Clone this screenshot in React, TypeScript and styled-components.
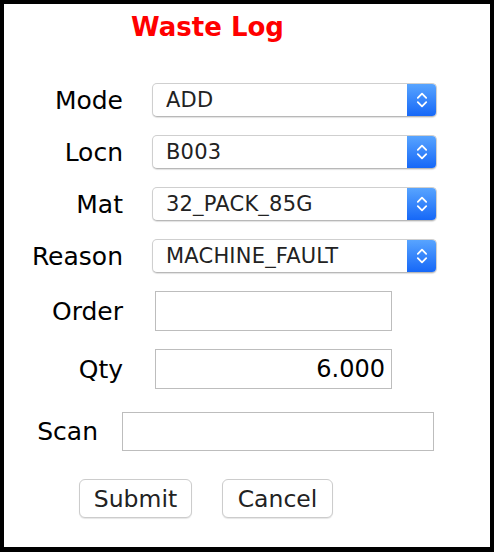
import { createGlobalStyle } from 'styled-components';
import styled from 'styled-components';

const GlobalStyle = createGlobalStyle`
    html, body {
        margin: 0;
        padding: 0;
        background: #fff;
    }
    * {
        box-sizing: border-box;
    }
`;

const fieldFont = `'DejaVu Sans', Verdana, sans-serif`;

const selects = [
    { label: 'Mode', value: 'ADD' },
    { label: 'Locn', value: 'B003' },
    { label: 'Mat', value: '32_PACK_85G' },
    { label: 'Reason', value: 'MACHINE_FAULT' },
];

const Chevrons = () => (
    <svg width="12" height="20" viewBox="0 0 12 20" fill="none">
        <path d="M1.8 7.8 L6 3.6 L10.2 7.8" stroke="#fff" strokeWidth="1.8" strokeLinecap="round" strokeLinejoin="round" />
        <path d="M1.8 12.2 L6 16.4 L10.2 12.2" stroke="#fff" strokeWidth="1.8" strokeLinecap="round" strokeLinejoin="round" />
    </svg>
);

export default function App() {
    return (
        <StyledFrame>
            <GlobalStyle />
            <StyledTitle>Waste Log</StyledTitle>
            <StyledForm>
                {selects.map((s) => (
                    <StyledRow key={s.label}>
                        <StyledLabel $width={119}>{s.label}</StyledLabel>
                        <StyledSelectShell $offset={29}>
                            <StyledSelect defaultValue={s.value}>
                                <option value={s.value}>{s.value}</option>
                            </StyledSelect>
                            <StyledStepper>
                                <Chevrons />
                            </StyledStepper>
                        </StyledSelectShell>
                    </StyledRow>
                ))}
                <StyledRow>
                    <StyledLabel $width={119}>Order</StyledLabel>
                    <StyledInput $offset={32} $width={237} $height={40} />
                </StyledRow>
                <StyledRow>
                    <StyledLabel $width={119}>Qty</StyledLabel>
                    <StyledInput $offset={32} $width={237} $height={40} $alignRight defaultValue="6.000" />
                </StyledRow>
                <StyledRow $spaceAbove={5}>
                    <StyledLabel $width={94}>Scan</StyledLabel>
                    <StyledInput $offset={24} $width={312} $height={39} />
                </StyledRow>
                <StyledButtons>
                    <StyledButton $width={113}>Submit</StyledButton>
                    <StyledButton $width={111}>Cancel</StyledButton>
                </StyledButtons>
            </StyledForm>
        </StyledFrame>
    );
}

const StyledFrame = styled.div`
    width: 494px;
    height: 552px;
    border: 4px solid #000;
    border-bottom-width: 5px;
    background: #fff;
    display: flex;
    flex-direction: column;
    padding-top: 8px;
`;

const StyledTitle = styled.div`
    font-family: 'DejaVu Sans', Verdana, sans-serif;
    font-weight: bold;
    font-size: 26px;
    line-height: 30px;
    height: 30px;
    color: #ff0000;
    padding-left: 127px;
`;

const StyledForm = styled.div`
    display: flex;
    flex-direction: column;
    gap: 18px;
    margin-top: 41px;
`;

const StyledRow = styled.div<{ $spaceAbove?: number }>`
    display: flex;
    align-items: center;
    margin-top: ${(p) => p.$spaceAbove ?? 0}px;
`;

const StyledLabel = styled.label<{ $width: number }>`
    width: ${(p) => p.$width}px;
    flex: none;
    text-align: right;
    font-family: ${fieldFont};
    font-size: 25px;
    color: #000;
    white-space: nowrap;
`;

const StyledSelectShell = styled.div<{ $offset: number }>`
    margin-left: ${(p) => p.$offset}px;
    width: 285px;
    height: 34px;
    display: flex;
    border: 1px solid #cfcfcf;
    border-bottom-color: #b8b8b8;
    border-radius: 5px;
    background: #fff;
    box-shadow: 0 1px 1px rgba(0, 0, 0, 0.12);
    overflow: hidden;
`;

const StyledSelect = styled.select`
    flex: 1;
    min-width: 0;
    appearance: none;
    border: none;
    outline: none;
    background: transparent;
    padding: 0 0 0 13px;
    font-family: ${fieldFont};
    font-size: 21px;
    letter-spacing: 0.2px;
    color: #222;
`;

const StyledStepper = styled.div`
    width: 30px;
    flex: none;
    display: flex;
    align-items: center;
    justify-content: center;
    margin: -1px -1px -1px 0;
    background: linear-gradient(#5aa6ff, #1466f7);
    border-radius: 0 5px 5px 0;
`;

const StyledInput = styled.input<{ $offset: number; $width: number; $height: number; $alignRight?: boolean }>`
    margin-left: ${(p) => p.$offset}px;
    width: ${(p) => p.$width}px;
    height: ${(p) => p.$height}px;
    border: 1px solid #bdbdbd;
    border-radius: 0;
    outline: none;
    padding: 0 6px;
    font-family: ${fieldFont};
    font-size: 24px;
    color: #000;
    text-align: ${(p) => (p.$alignRight ? 'right' : 'left')};
`;

const StyledButtons = styled.div`
    display: flex;
    gap: 30px;
    padding-left: 75px;
    margin-top: 10px;
`;

const StyledButton = styled.button<{ $width: number }>`
    width: ${(p) => p.$width}px;
    height: 39px;
    padding: 0;
    background: #fff;
    border: 1px solid #cccccc;
    border-radius: 6px;
    box-shadow: 0 1px 1px rgba(0, 0, 0, 0.1);
    font-family: ${fieldFont};
    font-size: 23.5px;
    color: #222;
`;
